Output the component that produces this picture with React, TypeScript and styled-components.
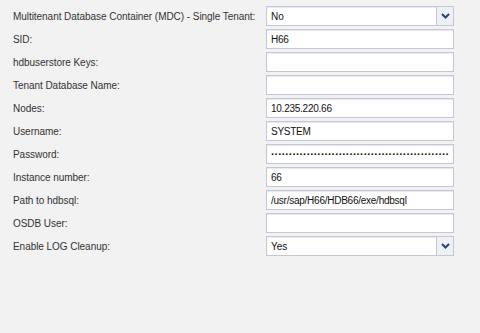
import styled, { createGlobalStyle } from 'styled-components';

const GlobalStyle = createGlobalStyle`
  html, body {
    margin: 0;
    padding: 0;
    background: #f2f2f2;
  }
  body {
    font-family: "Liberation Sans", Arial, sans-serif;
  }
`;

type Field = {
  label: string;
  value?: string;
  kind?: 'text' | 'select' | 'password';
};

const fields: Field[] = [
  { label: 'Multitenant Database Container (MDC) - Single Tenant:', value: 'No', kind: 'select' },
  { label: 'SID:', value: 'H66' },
  { label: 'hdbuserstore Keys:' },
  { label: 'Tenant Database Name:' },
  { label: 'Nodes:', value: '10.235.220.66' },
  { label: 'Username:', value: 'SYSTEM' },
  { label: 'Password:', value: '\u00b7'.repeat(62), kind: 'password' },
  { label: 'Instance number:', value: '66' },
  { label: 'Path to hdbsql:', value: '/usr/sap/H66/HDB66/exe/hdbsql' },
  { label: 'OSDB User:' },
  { label: 'Enable LOG Cleanup:', value: 'Yes', kind: 'select' },
];

function Chevron() {
  return (
    <svg width="9" height="6" viewBox="0 0 9 6">
      <path d="M1 1 L4.5 4.5 L8 1" fill="none" stroke="#27437a" strokeWidth="2" />
    </svg>
  );
}

export default function App() {
  return (
    <Page>
      <GlobalStyle />
      <Form>
        {fields.map((f) => (
          <Row key={f.label}>
            <Label>{f.label}</Label>
            {f.kind === 'select' ? (
              <Select>
                <SelectValue>{f.value}</SelectValue>
                <DropButton>
                  <Chevron />
                </DropButton>
              </Select>
            ) : (
              <Input readOnly value={f.value ?? ''} $dots={f.kind === 'password'} />
            )}
          </Row>
        ))}
      </Form>
    </Page>
  );
}

const Page = styled.div`
  width: 480px;
  height: 333px;
  background: #f2f2f2;
  box-sizing: border-box;
  padding: 6px 0 0 13px;
`;

const Form = styled.div`
  display: grid;
  gap: 3px;
`;

const Row = styled.div`
  display: grid;
  grid-template-columns: 253px 188px;
  align-items: center;
  height: 20px;
`;

const Label = styled.div`
  font-size: 10px;
  letter-spacing: -0.05px;
  color: #333;
  white-space: nowrap;
  padding-top: 1px;
`;

const boxStyle = `
  box-sizing: border-box;
  height: 20px;
  width: 188px;
  border: 1px solid #c4c8d6;
  background: #fff;
  box-shadow: inset 0 1px 1px #e6e8ee;
`;

const Input = styled.input<{ $dots?: boolean }>`
  ${boxStyle}
  margin: 0;
  padding: 0 4px;
  font-family: "Liberation Sans", Arial, sans-serif;
  font-size: ${(p) => (p.$dots ? '11px' : '10px')};
  letter-spacing: ${(p) => (p.$dots ? '-0.1px' : '-0.25px')};
  color: #111;
  outline: none;
  font-weight: ${(p) => (p.$dots ? 'bold' : 'normal')};
  overflow: hidden;
`;

const Select = styled.div`
  ${boxStyle}
  display: flex;
  align-items: stretch;
`;

const SelectValue = styled.div`
  flex: 1;
  display: flex;
  align-items: center;
  padding: 0 4px;
  font-size: 10px;
  color: #111;
`;

const DropButton = styled.div`
  width: 16px;
  border-left: 1px solid #c4c8d6;
  background: #eef0f4;
  display: flex;
  align-items: center;
  justify-content: center;
`;
